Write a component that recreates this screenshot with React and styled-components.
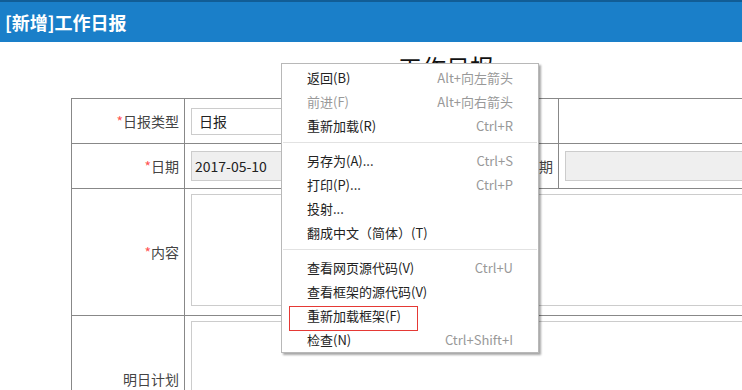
import React from 'react';
import styled, { createGlobalStyle } from 'styled-components';

const Global = createGlobalStyle`
  html, body { margin: 0; padding: 0; background: #fff; overflow: hidden; }
  body { font-family: "Noto Sans CJK SC", "Microsoft YaHei", "Noto Sans", sans-serif; }
`;

const Screen = styled.div`
  position: relative;
  width: 742px;
  height: 390px;
  overflow: hidden;
`;

const Header = styled.div`
  height: 40px;
  border-top: 2px solid #115d96;
  background: #1a7fc9;
  color: #fff;
  font-size: 18px;
  font-weight: bold;
  line-height: 40px;
  padding-left: 5px;
`;

const Page = styled.div`
  width: 750px;
  margin-left: 71px;
`;

const Title = styled.div`
  margin: 8px 0 14px;
  text-align: center;
  font-size: 24px;
  line-height: 34px;
  color: #111;
`;

const Table = styled.table`
  border-collapse: collapse;
  width: 750px;
  table-layout: fixed;
  font-size: 14px;
  color: #444;

  td {
    border: 1px solid #888;
    padding: 0;
  }
`;

const Row = styled.tr`
  height: ${p => p.$h}px;
`;

const Label = styled.td`
  text-align: right;
  padding-right: 5px !important;
  vertical-align: middle;
  white-space: nowrap;
`;

const Star = styled.span`
  color: #f55;
`;

const Cell = styled.td`
  padding: ${p => (p.$top ? '5px 6px 0' : '0 6px')} !important;
  vertical-align: ${p => (p.$top ? 'top' : 'middle')};
`;

const Field = styled.div`
  height: ${p => p.$h}px;
  border: 1px solid #ccc;
  background: ${p => (p.$gray ? '#efefef' : '#fff')};
  box-sizing: border-box;
  padding-left: ${p => p.$pl || 3}px;
  line-height: ${p => p.$h - 2}px;
  color: #222;
`;

const Menu = styled.div`
  position: absolute;
  left: 281px;
  top: 63px;
  width: 258px;
  box-sizing: border-box;
  background: #fff;
  border: 1px solid #b8b8b8;
  box-shadow: 2px 2px 2px rgba(0, 0, 0, 0.35);
  padding: 1px 0 1px;
  font-size: 13px;
`;

const Item = styled.div`
  display: flex;
  justify-content: space-between;
  align-items: center;
  height: 24px;
  padding: 0 25px;
  color: ${p => (p.$off ? '#999' : '#222')};
`;

const Key = styled.span`
  color: #999;
`;

const Sep = styled.div`
  height: 1px;
  background: #e2e2e2;
  margin: 5px 1px;
`;

const Mark = styled.div`
  position: absolute;
  left: 289px;
  top: 306px;
  width: 129px;
  height: 25px;
  box-sizing: border-box;
  border: 1px solid #e53935;
`;

const groups = [
  [
    ['返回(B)', 'Alt+向左箭头'],
    ['前进(F)', 'Alt+向右箭头', true],
    ['重新加载(R)', 'Ctrl+R'],
  ],
  [
    ['另存为(A)...', 'Ctrl+S'],
    ['打印(P)...', 'Ctrl+P'],
    ['投射...', ''],
    ['翻成中文（简体）(T)', ''],
  ],
  [
    ['查看网页源代码(V)', 'Ctrl+U'],
    ['查看框架的源代码(V)', ''],
    ['重新加载框架(F)', ''],
    ['检查(N)', 'Ctrl+Shift+I'],
  ],
];

export default function App() {
  return (
    <Screen>
      <Global />
      <Header>[新增]工作日报</Header>
      <Page>
        <Title>工作日报</Title>
        <Table>
          <colgroup>
            <col style={{ width: 113 }} />
            <col style={{ width: 260 }} />
            <col style={{ width: 114 }} />
            <col style={{ width: 263 }} />
          </colgroup>
          <tbody>
            <Row $h={45}>
              <Label><Star>*</Star>日报类型</Label>
              <Cell><Field $h={27} $pl={7}>日报</Field></Cell>
              <Label />
              <Cell />
            </Row>
            <Row $h={45}>
              <Label><Star>*</Star>日期</Label>
              <Cell><Field $h={30} $gray>2017-05-10</Field></Cell>
              <Label><Star>*</Star>填报日期</Label>
              <Cell><Field $h={30} $gray /></Cell>
            </Row>
            <Row $h={127}>
              <Label><Star>*</Star>内容</Label>
              <Cell colSpan={3} $top><Field $h={112} /></Cell>
            </Row>
            <Row $h={127}>
              <Label>明日计划</Label>
              <Cell colSpan={3} $top><Field $h={112} /></Cell>
            </Row>
          </tbody>
        </Table>
      </Page>
      <Menu>
        {groups.map((g, i) => (
          <React.Fragment key={i}>
            {i > 0 && <Sep />}
            {g.map(([t, k, off]) => (
              <Item key={t} $off={off}>
                <span>{t}</span>
                <Key>{k}</Key>
              </Item>
            ))}
          </React.Fragment>
        ))}
      </Menu>
      <Mark />
    </Screen>
  );
}
